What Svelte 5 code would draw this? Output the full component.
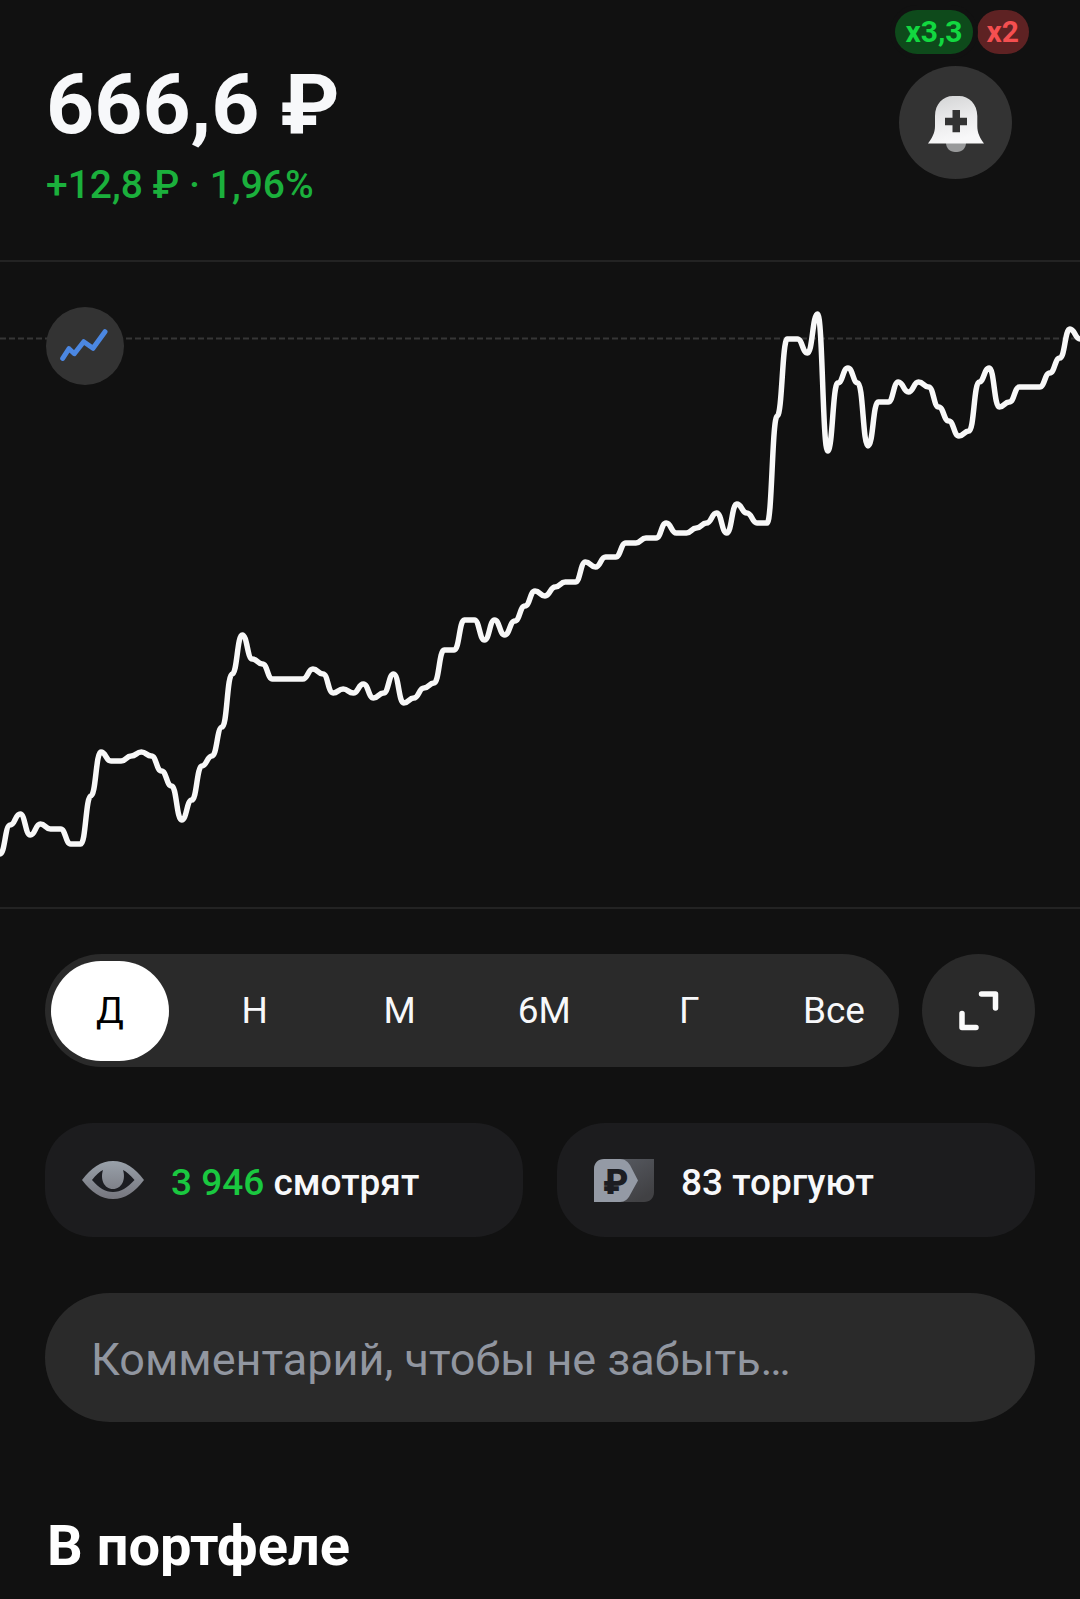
<script>
	let periods = ['Д', 'Н', 'М', '6М', 'Г', 'Все'];
	let period = 'Д';
	let comment = '';

	// vertical position of every tick, evenly spaced over the day
	const ticks = [
		592, 563, 552, 573, 562, 567, 567, 582, 582, 534, 490, 499, 499, 494, 490, 494, 509, 524,
		558, 538, 504, 494, 465, 412, 373, 397, 402, 417, 417, 417, 417, 407, 412, 431, 427, 431,
		422, 436, 431, 412, 441, 436, 426, 421, 388, 388, 358, 358, 378, 358, 373, 359, 344, 329,
		334, 325, 320, 320, 300, 305, 295, 295, 281, 281, 276, 276, 261, 271, 271, 266, 261, 251,
		271, 242, 251, 261, 261, 154, 77, 77, 91, 52, 189, 121, 106, 121, 184, 140, 140, 120,
		130, 120, 125, 145, 159, 174, 169, 120, 106, 145, 140, 125, 125, 125, 111, 96, 67, 77
	];
	const step = 1080 / (ticks.length - 1);

	const linePath = (values) => {
		let d = `M0 ${values[0]}`;
		for (let i = 1; i < values.length; i++) {
			const mid = ((i - 0.5) * step).toFixed(1);
			d += `C${mid} ${values[i - 1]} ${mid} ${values[i]} ${(i * step).toFixed(1)} ${values[i]}`;
		}
		return d;
	};
</script>

<main>
	<header>
		<div>
			<h1>666,6 ₽</h1>
			<p class="change">+12,8 ₽ · 1,96%</p>
		</div>
		<div class="alerts">
			<div class="badges">
				<span class="badge up">x3,3</span>
				<span class="badge down">x2</span>
			</div>
			<button class="round bell" aria-label="Добавить уведомление">
				<svg width="113" height="113" viewBox="0 0 113 113">
					<defs>
						<linearGradient id="bell" x1="0" y1="0" x2="0.3" y2="1">
							<stop offset="0" stop-color="#d2d3d4" />
							<stop offset="0.6" stop-color="#ececed" />
							<stop offset="1" stop-color="#f8f8f9" />
						</linearGradient>
					</defs>
					<path d="M47 77h20c0 5-4 9-9 9h-2c-5 0-9-4-9-9z" fill="#98999a" />
					<path d="M29 77.500C33 72 36 67 36 60V50C36 38 44 30 54 30h6c10 0 18.300 8 18.300 20v10c0 7 2.700 12 6.700 17.500z" fill="url(#bell)" />
					<path d="M53.500 44h7.500v7.700h7v7.500h-7v7h-7.500v-7h-7.500v-7.500h7.500z" fill="#333" />
				</svg>
			</button>
		</div>
	</header>

	<section class="chart">
		<svg class="plot" viewBox="0 0 1080 645" preserveAspectRatio="none">
			<line x1="0" y1="76.500" x2="1080" y2="76.500" stroke="#363636" stroke-width="2" stroke-dasharray="6 3" />
			<path d={linePath(ticks)} fill="none" stroke="#f8f8f8" stroke-width="5.500" stroke-linejoin="round" />
		</svg>
		<button class="round kind" aria-label="Вид графика">
			<svg width="78" height="78" viewBox="0 0 78 78">
				<path d="M16.700 51.300L23 41.700l5.300 5L37.700 34.700l9.300 6.600L59 24.700" fill="none" stroke="#4b87e2" stroke-width="5" stroke-linecap="round" stroke-linejoin="round" />
			</svg>
		</button>
	</section>

	<div class="content">
		<div class="range">
			<div class="periods">
				{#each periods as p}
					<button class:active={p === period} on:click={() => (period = p)}>{p}</button>
				{/each}
			</div>
			<button class="round expand" aria-label="На весь экран">
				<svg width="40" height="40" viewBox="0 0 40 40" fill="none" stroke="#fafafa" stroke-width="5.500" stroke-linecap="round" stroke-linejoin="round">
					<path d="M22.500 3H36.500V17M3 22.500V36.500H17" />
				</svg>
			</button>
		</div>

		<div class="stats">
			<div class="stat">
				<svg width="62" height="43" viewBox="0 0 62 43">
					<defs>
						<linearGradient id="eye" x1="0" y1="0" x2="0" y2="1">
							<stop offset="0" stop-color="#99a1aa" />
							<stop offset="1" stop-color="#76767e" />
						</linearGradient>
					</defs>
					<path d="M0 21C9 9 19 2 31 2s22 7 31 19C53 33 43 40 31 40S9 33 0 21z" fill="url(#eye)" />
					<path d="M10 21C14 16 17.500 12.500 21 11c-3 9 1 19 10 19s13-10 10-19c3.500 1.500 7 5 11.500 10C45 29 39 33 31 33S17 29 10 21z" fill="#1c1d22" />
				</svg>
				<span><b>3 946</b> смотрят</span>
			</div>
			<div class="stat">
				<svg width="60" height="43" viewBox="0 0 60 43">
					<defs>
						<linearGradient id="tag" x1="0" y1="0" x2="0.5" y2="1">
							<stop offset="0" stop-color="#565960" />
							<stop offset="1" stop-color="#414144" />
						</linearGradient>
					</defs>
					<path d="M24 0h36v33c0 6-4 10-10 10H24z" fill="url(#tag)" />
					<path d="M0 43V10C0 4 4 0 10 0h16c5 0 8 3 10 6l8 15.500L36 36c-2 4-5 7-10 7z" fill="#949aa5" />
					<text x="9" y="35" class="coin">₽</text>
				</svg>
				<span>83 торгуют</span>
			</div>
		</div>

		<input class="comment" type="text" placeholder="Комментарий, чтобы не забыть…" aria-label="Комментарий" bind:value={comment} />

		<h2>В портфеле</h2>
	</div>
</main>

<style>
	:global(body) {
		background: #111;
	}
	main {
		color: #f7f8fa;
		font-family: Roboto, "Liberation Sans", sans-serif;
	}
	h1, h2, p {
		margin: 0;
	}
	button {
		border: 0;
		padding: 0;
		font: inherit;
		color: inherit;
		cursor: pointer;
	}
	svg {
		display: block;
		flex: none;
	}
	header {
		display: flex;
		justify-content: space-between;
		align-items: flex-start;
		padding: 56px 51px 51px 46px;
	}
	h1 {
		font-size: 84px;
		line-height: 98px;
		font-weight: 700;
	}
	.change {
		margin-top: 8px;
		color: #1bb03c;
		font-size: 39px;
		line-height: 47px;
		font-weight: 500;
	}
	.alerts {
		display: flex;
		flex-direction: column;
		align-items: flex-end;
		gap: 12px;
		margin-top: -46px;
		margin-bottom: -46px;
	}
	.badges {
		display: flex;
		gap: 4px;
	}
	.badge {
		padding: 0 10px;
		border-radius: 22px;
		font-size: 30px;
		line-height: 44px;
		font-weight: 700;
	}
	.up {
		z-index: 1;
		background: #0e4a1b;
		color: #12d840;
		box-shadow: 0 0 0 5px #111;
	}
	.down {
		background: #5e2223;
		color: #f54f50;
	}
	.round {
		display: flex;
		align-items: center;
		justify-content: center;
		flex: none;
		border-radius: 50%;
		background: #333;
	}
	.bell {
		width: 113px;
		height: 113px;
		margin-right: 17px;
	}
	.chart {
		position: relative;
		border-top: 2px solid #232323;
		border-bottom: 2px solid #232323;
	}
	.plot {
		width: 100%;
		height: 645px;
	}
	.kind {
		position: absolute;
		left: 46px;
		top: 45px;
		width: 78px;
		height: 78px;
	}
	.content {
		padding: 45px 45px 0;
	}
	.range {
		display: flex;
		gap: 23px;
	}
	.periods {
		flex: 1;
		display: flex;
		justify-content: space-between;
		align-items: center;
		padding: 0 6px;
		border-radius: 57px;
		background: #2a2a2a;
	}
	.periods button {
		width: 118px;
		height: 100px;
		border-radius: 50px;
		background: none;
		font-size: 37px;
	}
	.periods .active {
		background: #fff;
		color: #000;
	}
	.expand {
		width: 113px;
		height: 113px;
		background: #2a2a2a;
	}
	.stats {
		display: grid;
		grid-template-columns: 1fr 1fr;
		gap: 34px;
		margin: 56px 0;
	}
	.stat {
		display: flex;
		align-items: center;
		gap: 27px;
		height: 114px;
		padding: 0 37px;
		border-radius: 48px;
		background: #1c1c1e;
		font-size: 37px;
		font-weight: 500;
	}
	.stat span {
		padding-top: 4px;
	}
	.stat b {
		color: #1ac840;
		font-weight: 500;
	}
	.coin {
		fill: #1c1d22;
		font-size: 35px;
		font-weight: 900;
	}
	.comment {
		display: block;
		box-sizing: border-box;
		width: 100%;
		height: 129px;
		padding: 4px 46px 0;
		border: 0;
		border-radius: 65px;
		background: #2a2a2a;
		color: #f7f8fa;
		font-family: inherit;
		font-size: 45px;
	}
	.comment::placeholder {
		color: #9196a0;
		opacity: 1;
	}
	h2 {
		margin-top: 91px;
		padding-left: 2px;
		color: #fff;
		font-size: 56px;
		line-height: 66px;
		font-weight: 700;
	}
</style>
